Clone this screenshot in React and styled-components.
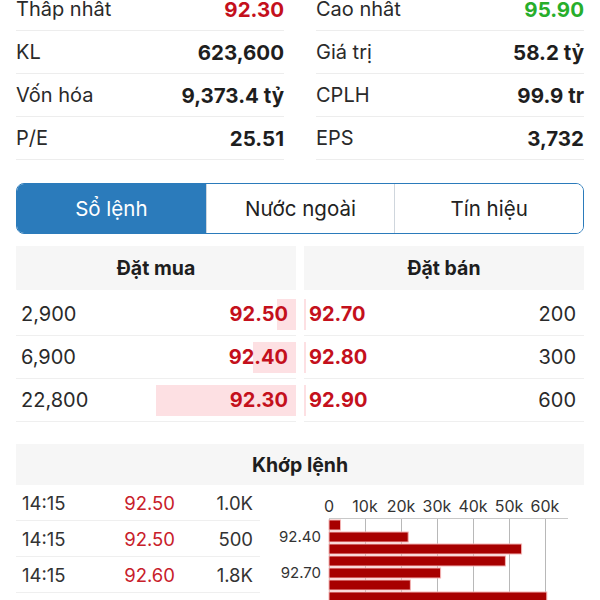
import React, { useState } from "react";
import styled, { createGlobalStyle } from "styled-components";

const RED = "#c4101c";
const GREEN = "#27ae2b";
const BLUE = "#2b7bbb";

const stats = [
  [
    { label: "Thấp nhất", value: "92.30", color: RED },
    { label: "KL", value: "623,600" },
    { label: "Vốn hóa", value: "9,373.4 tỷ" },
    { label: "P/E", value: "25.51" },
  ],
  [
    { label: "Cao nhất", value: "95.90", color: GREEN },
    { label: "Giá trị", value: "58.2 tỷ" },
    { label: "CPLH", value: "99.9 tr" },
    { label: "EPS", value: "3,732" },
  ],
];

const buys = [
  { qty: "2,900", price: "92.50", pct: 6.8 },
  { qty: "6,900", price: "92.40", pct: 15.4 },
  { qty: "22,800", price: "92.30", pct: 50 },
];

const sells = [
  { qty: "200", price: "92.70", pct: 0.7 },
  { qty: "300", price: "92.80", pct: 0.7 },
  { qty: "600", price: "92.90", pct: 0.7 },
];

const matches = [
  { time: "14:15", price: "92.50", vol: "1.0K" },
  { time: "14:15", price: "92.50", vol: "500" },
  { time: "14:15", price: "92.60", vol: "1.8K" },
];

const volumeBars = [3.2, 22, 53.5, 49, 31, 22.6, 60.5];

function VolumeChart() {
  const x0 = 69;
  const unit = 3.6;
  const ticks = [0, 10, 20, 30, 40, 50, 60];
  return (
    <svg width="324" height="116" viewBox="0 0 324 116">
      {ticks.map((t) => (
        <text
          key={"l" + t}
          x={x0 + t * unit}
          y={27}
          textAnchor="middle"
          fontSize="16"
          fill="#333"
          fontFamily="Inter, sans-serif"
        >
          {t === 0 ? "0" : t + "k"}
        </text>
      ))}
      <line x1={x0} x2={308} y1={33.5} y2={33.5} stroke="#c8c8c8" strokeWidth="1" />
      {ticks.map((t) => (
        <line
          key={"g" + t}
          x1={x0 + t * unit + 0.5}
          x2={x0 + t * unit + 0.5}
          y1={34}
          y2={116}
          stroke="#b8b8b8"
          strokeWidth="1"
        />
      ))}
      {volumeBars.map((v, i) => (
        <rect
          key={i}
          x={x0}
          y={35 + i * 12}
          width={v * unit}
          height={10}
          fill="#a70000"
          stroke="#f3b3b3"
          strokeWidth="1"
        />
      ))}
      <text x={61} y={57} textAnchor="end" fontSize="15" fill="#333" fontFamily="Inter, sans-serif">
        92.40
      </text>
      <text x={61} y={93} textAnchor="end" fontSize="15" fill="#333" fontFamily="Inter, sans-serif">
        92.70
      </text>
    </svg>
  );
}

export default function App() {
  const [tab, setTab] = useState(0);
  const tabs = ["Sổ lệnh", "Nước ngoài", "Tín hiệu"];
  return (
    <>
      <GlobalStyle />
      <Page>
        <StatsGrid>
          {stats.map((col, ci) => (
            <StatCol key={ci}>
              {col.map((s) => (
                <StatRow key={s.label}>
                  <StatLabel>{s.label}</StatLabel>
                  <StatValue $color={s.color}>{s.value}</StatValue>
                </StatRow>
              ))}
            </StatCol>
          ))}
        </StatsGrid>

        <Tabs>
          {tabs.map((t, i) => (
            <Tab key={t} $active={tab === i} onClick={() => setTab(i)}>
              {t}
            </Tab>
          ))}
        </Tabs>

        <Book>
          <BookSide>
            <SideHeader>Đặt mua</SideHeader>
            {buys.map((b) => (
              <BookRow key={b.price}>
                <DepthBar $side="buy" style={{ width: b.pct + "%" }} />
                <Qty>{b.qty}</Qty>
                <Price>{b.price}</Price>
              </BookRow>
            ))}
          </BookSide>
          <BookSide>
            <SideHeader>Đặt bán</SideHeader>
            {sells.map((s) => (
              <BookRow key={s.price}>
                <DepthBar $side="sell" style={{ width: s.pct + "%" }} />
                <Price>{s.price}</Price>
                <Qty>{s.qty}</Qty>
              </BookRow>
            ))}
          </BookSide>
        </Book>

        <Matched>
          <MatchHeader>Khớp lệnh</MatchHeader>
          <MatchedBody>
            <MatchTable>
              {matches.map((m, i) => (
                <MatchRow key={i}>
                  <span>{m.time}</span>
                  <MatchPrice>{m.price}</MatchPrice>
                  <MatchVol>{m.vol}</MatchVol>
                </MatchRow>
              ))}
            </MatchTable>
            <VolumeChart />
          </MatchedBody>
        </Matched>
      </Page>
    </>
  );
}

const GlobalStyle = createGlobalStyle`
  html, body {
    margin: 0;
    padding: 0;
    background: #fff;
    overflow: hidden;
  }
  body {
    font-family: Inter, "Noto Sans", sans-serif;
    color: #222;
  }
`;

const Page = styled.div`
  width: 600px;
  box-sizing: border-box;
  padding: 0 16px;
  margin-top: -12px;
`;

const StatsGrid = styled.div`
  display: grid;
  grid-template-columns: 1fr 1fr;
  gap: 32px;
`;

const StatCol = styled.div`
  display: flex;
  flex-direction: column;
`;

const StatRow = styled.div`
  display: flex;
  justify-content: space-between;
  align-items: center;
  height: 42px;
  border-bottom: 1px solid #ededed;
`;

const StatLabel = styled.span`
  font-size: 20px;
  color: #2a2a2a;
`;

const StatValue = styled.span`
  font-size: 20.5px;
  font-weight: 700;
  color: ${(p) => p.$color || "#1e1e1e"};
`;

const Tabs = styled.div`
  display: grid;
  grid-template-columns: repeat(3, 1fr);
  margin-top: 23px;
  height: 51px;
  box-sizing: border-box;
  border: 1.5px solid ${BLUE};
  border-radius: 8px;
  overflow: hidden;
`;

const Tab = styled.div`
  display: flex;
  align-items: center;
  justify-content: center;
  font-size: 20.5px;
  cursor: pointer;
  background: ${(p) => (p.$active ? BLUE : "#fff")};
  color: ${(p) => (p.$active ? "#fff" : "#222")};
  & + & {
    border-left: 1px solid #cfd6dd;
  }
`;

const Book = styled.div`
  display: grid;
  grid-template-columns: 1fr 1fr;
  gap: 8px;
  margin-top: 12px;
`;

const BookSide = styled.div`
  display: flex;
  flex-direction: column;
`;

const SideHeader = styled.div`
  display: flex;
  align-items: center;
  justify-content: center;
  height: 44px;
  margin-bottom: 3px;
  background: #f6f6f6;
  font-size: 19.5px;
  font-weight: 700;
  color: #1e1e1e;
`;

const BookRow = styled.div`
  position: relative;
  display: flex;
  justify-content: space-between;
  align-items: center;
  height: 42px;
  padding: 0 8px 0 5px;
  border-bottom: 1px solid #efefef;
  font-size: 20px;
`;

const DepthBar = styled.div`
  position: absolute;
  top: 6px;
  bottom: 5px;
  ${(p) => (p.$side === "buy" ? "right: 0;" : "left: 0;")}
  background: #fde0e3;
`;

const Qty = styled.span`
  position: relative;
  color: #2a2a2a;
`;

const Price = styled.span`
  position: relative;
  font-weight: 700;
  color: ${RED};
`;

const Matched = styled.div`
  margin-top: 22px;
`;

const MatchHeader = styled(SideHeader)`
  height: 41px;
  margin-bottom: 0;
`;

const MatchedBody = styled.div`
  display: flex;
  align-items: flex-start;
`;

const MatchTable = styled.div`
  width: 244px;
  display: flex;
  flex-direction: column;
`;

const MatchRow = styled.div`
  display: grid;
  grid-template-columns: 1fr 80px 78px;
  align-items: center;
  height: 35px;
  padding: 0 7px 0 6px;
  border-bottom: 1px solid #efefef;
  font-size: 18.5px;
  color: #333;
`;

const MatchPrice = styled.span`
  text-align: right;
  color: #c8202a;
`;

const MatchVol = styled.span`
  text-align: right;
`;
